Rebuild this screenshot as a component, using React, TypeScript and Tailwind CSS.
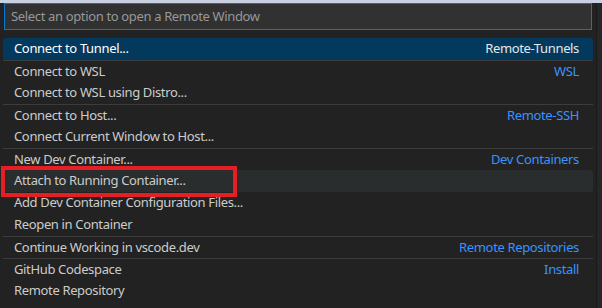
import React from "react";

type Row = { label: string; desc?: string; sep?: boolean; active?: boolean; hover?: boolean };

const rows: Row[] = [
  { label: "Connect to Tunnel...", desc: "Remote-Tunnels", active: true },
  { label: "Connect to WSL", desc: "WSL", sep: true },
  { label: "Connect to WSL using Distro..." },
  { label: "Connect to Host...", desc: "Remote-SSH", sep: true },
  { label: "Connect Current Window to Host..." },
  { label: "New Dev Container...", desc: "Dev Containers", sep: true },
  { label: "Attach to Running Container...", hover: true },
  { label: "Add Dev Container Configuration Files..." },
  { label: "Reopen in Container" },
  { label: "Continue Working in vscode.dev", desc: "Remote Repositories", sep: true },
  { label: "GitHub Codespace", desc: "Install", sep: true },
  { label: "Remote Repository" },
];

export default function App() {
  return (
    <div
      className="relative w-[602px] h-[308px] overflow-hidden bg-[#222222] flex flex-col tracking-[-0.35px]"
      style={{ fontFamily: '"Noto Sans", "Open Sans", sans-serif' }}
    >
      <div className="h-[3px] bg-[#c9d0e2] shrink-0" />
      <div className="flex flex-1">
        <div className="w-[597px] border-r border-[#1a1a1a] flex flex-col">
          <div className="mx-[4px] h-[27px] border border-[#0078d4] bg-[#313131] flex items-center pl-[6px] text-[13px] text-[#989898]">
            Select an option to open a Remote Window
          </div>
          <div className="mt-[8px] flex flex-col">
            {rows.map((r, i) => (
              <div
                key={i}
                className={
                  "mx-[3px] h-[22px] flex items-center justify-between pl-[11px] pr-[14px] text-[13px] " +
                  (r.sep ? "border-t border-[#3c3c3c] " : "") +
                  (r.active
                    ? "bg-[#04395e] rounded-[3px] text-white"
                    : r.hover
                    ? "bg-[#2a2d2e] rounded-[3px] text-[#cccccc]"
                    : "text-[#cccccc]")
                }
              >
                <span className="whitespace-nowrap">{r.label}</span>
                {r.desc && (
                  <span className={"whitespace-nowrap " + (r.active ? "text-[#e6e6e6]" : "text-[#3794ff]")}>
                    {r.desc}
                  </span>
                )}
              </div>
            ))}
          </div>
        </div>
        <div className="flex-1 bg-[#262626]" />
      </div>
      <div className="absolute left-[1px] top-[166px] w-[236px] h-[31px] border-[4px] border-[#e81e25]" />
    </div>
  );
}
